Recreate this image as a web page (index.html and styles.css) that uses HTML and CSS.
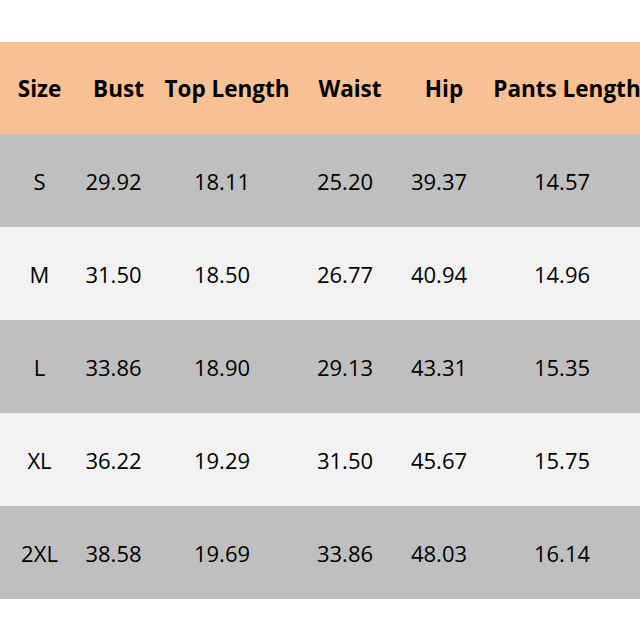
FILE: index.html
```html
<!DOCTYPE html>
<html>
<head>
<meta charset="utf-8">
<link rel="stylesheet" href="styles.css">
</head>
<body>
<div class="wrap">
<table class="chart">
<colgroup>
<col class="c1"><col class="c2"><col class="c3"><col class="c4"><col class="c5"><col class="c6">
</colgroup>
<thead>
<tr class="head"><th>Size</th><th>Bust</th><th>Top Length</th><th>Waist</th><th>Hip</th><th>Pants Length</th></tr>
</thead>
<tbody>
<tr class="dark"><td>S</td><td>29.92</td><td>18.11</td><td>25.20</td><td>39.37</td><td>14.57</td></tr>
<tr class="light"><td>M</td><td>31.50</td><td>18.50</td><td>26.77</td><td>40.94</td><td>14.96</td></tr>
<tr class="dark"><td>L</td><td>33.86</td><td>18.90</td><td>29.13</td><td>43.31</td><td>15.35</td></tr>
<tr class="light"><td>XL</td><td>36.22</td><td>19.29</td><td>31.50</td><td>45.67</td><td>15.75</td></tr>
<tr class="dark"><td>2XL</td><td>38.58</td><td>19.69</td><td>33.86</td><td>48.03</td><td>16.14</td></tr>
</tbody>
</table>
</div>
</body>
</html>
```
FILE: styles.css
```css
html, body {
  margin: 0;
  padding: 0;
  background: #ffffff;
}
body {
  overflow: hidden;
}
.wrap {
  padding-top: 42px;
  width: 640px;
  overflow: hidden;
}
.chart {
  border-collapse: collapse;
  table-layout: fixed;
  width: 650px;
  font-family: "Open Sans", "Noto Sans", sans-serif;
  font-size: 22px;
  color: #000;
}
.c1 { width: 79px; }
.c2 { width: 79px; }
.c3 { width: 138px; }
.c4 { width: 108px; }
.c5 { width: 80px; }
.c6 { width: 166px; }
.chart th, .chart td {
  padding: 0;
  text-align: center;
  white-space: nowrap;
  overflow: visible;
}
.chart th {
  font-weight: 700;
  font-size: 22.5px;
  height: 92px;
}
.chart td {
  height: 93px;
}
.chart td + td {
  padding-right: 10px;
}
.head { background: #f8c193; }
.dark { background: #bfbfbf; }
.light { background: #f2f2f2; }
```
